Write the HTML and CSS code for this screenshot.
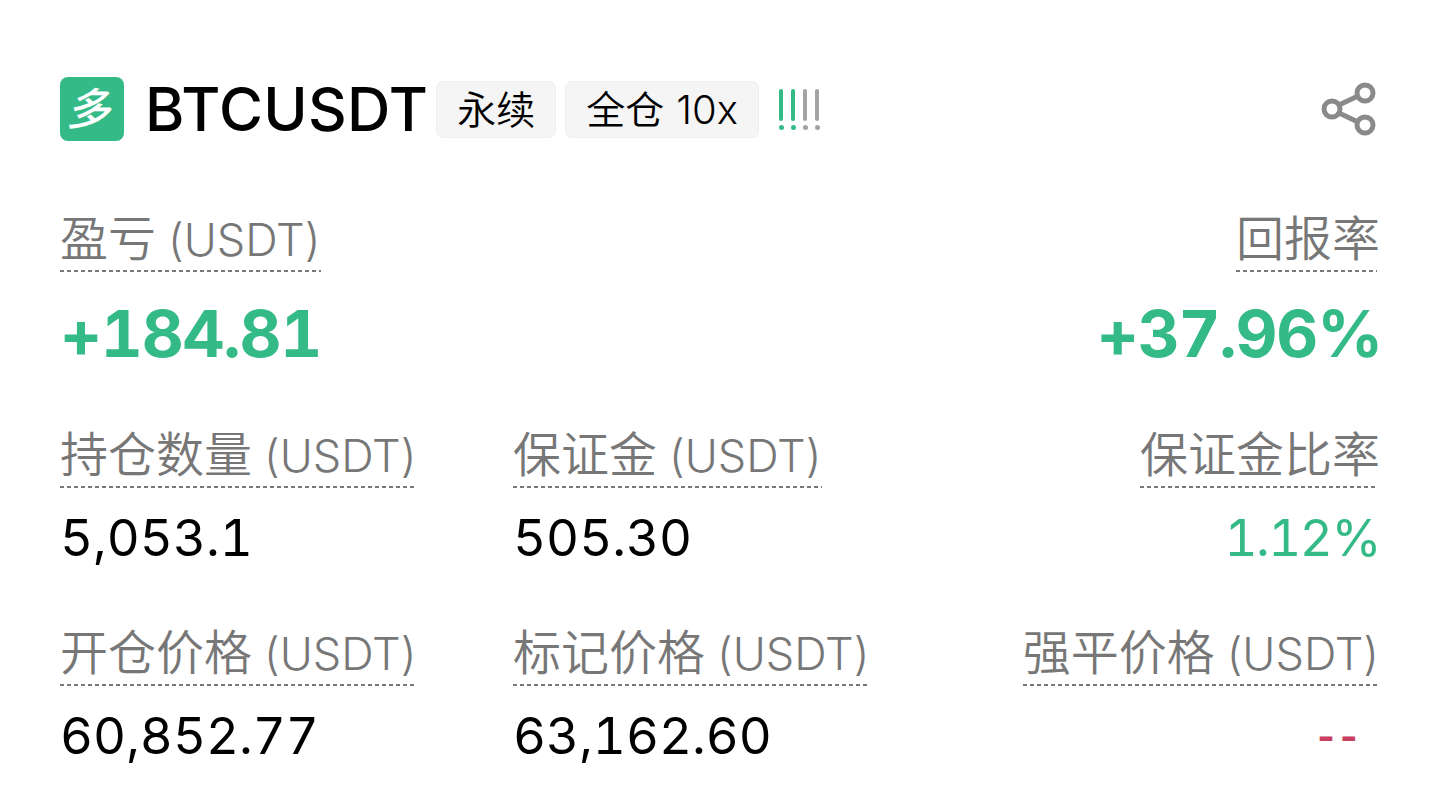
FILE: index.html
```html
<!DOCTYPE html>
<html lang="en">
<head>
    <meta charset="UTF-8">
    <meta name="viewport" content="width=device-width, initial-scale=1.0">
    <title>BTCUSDT</title>
    <link rel="stylesheet" href="styles.css">
</head>
<body>
    <div class="header">
        <div class="side-badge"><span>多</span></div>
        <div class="symbol">BTCUSDT</div>
        <div class="tag">永续</div>
        <div class="tag">全仓 <span class="lev">10x</span></div>
        <div class="risk">
            <span class="mark on"></span>
            <span class="mark on"></span>
            <span class="mark"></span>
            <span class="mark"></span>
        </div>
        <svg class="share" width="56" height="56" viewBox="0 0 56 56" fill="none" stroke="#8a8a8a" stroke-width="5">
            <circle cx="44" cy="12" r="8"/>
            <circle cx="11" cy="28" r="8"/>
            <circle cx="44" cy="44" r="8"/>
            <path d="M18 24L37 15M18 32L37 41"/>
        </svg>
    </div>
    <div class="stats">
        <div class="stat">
            <div class="label">盈亏 <span class="unit">(USDT)</span></div>
            <div class="value big green">+184.81</div>
        </div>
        <div class="stat right col3">
            <div class="label short">回报率</div>
            <div class="value big green">+37.96%</div>
        </div>
        <div class="stat row2">
            <div class="label">持仓数量 <span class="unit">(USDT)</span></div>
            <div class="value">5,053.1</div>
        </div>
        <div class="stat row2">
            <div class="label">保证金 <span class="unit">(USDT)</span></div>
            <div class="value">505.30</div>
        </div>
        <div class="stat right row2">
            <div class="label short">保证金比率</div>
            <div class="value rate green">1.12%</div>
        </div>
        <div class="stat row3">
            <div class="label">开仓价格 <span class="unit">(USDT)</span></div>
            <div class="value">60,852.77</div>
        </div>
        <div class="stat row3">
            <div class="label">标记价格 <span class="unit">(USDT)</span></div>
            <div class="value">63,162.60</div>
        </div>
        <div class="stat right row3">
            <div class="label">强平价格 <span class="unit">(USDT)</span></div>
            <div class="value red">--</div>
        </div>
    </div>
</body>
</html>
```

FILE: styles.css
```css
*{
    margin:0;
    padding:0;
    box-sizing: border-box;
}
body{
    height: 100vh;
    padding: 77px 60px 0;
    background-color: #fff;
    color: #000;
    font-family: Inter, "Noto Sans CJK SC", sans-serif;
    overflow: hidden;
}
.header{
    height: 64px;
    display: flex;
    align-items: center;
}
.side-badge{
    width: 64px;
    height: 64px;
    margin-right: 21px;
    border-radius: 8px;
    background-color: #34ba87;
    color: #fff;
    font-size: 44px;
    font-weight: 500;
    line-height: 64px;
    text-align: center;
}
.side-badge span{
    display: inline-block;
    transform: skewX(-14deg);
}
.symbol{
    margin-right: -1px;
    font-size: 60px;
    font-weight: 500;
    line-height: 64px;
    letter-spacing: 0.3px;
}
.tag{
    height: 57px;
    margin-left: 9px;
    padding: 0 20px;
    border: 1px solid #eeeeee;
    border-radius: 7px;
    background-color: #f5f5f5;
    font-size: 39px;
    font-weight: 350;
    line-height: 56px;
    word-spacing: 1px;
}
.lev{
    font-size: 40px;
}
.risk{
    display: flex;
    gap: 7px;
    margin-left: 20px;
}
.mark{
    display: flex;
    flex-direction: column;
    align-items: center;
    gap: 4px;
    width: 5px;
}
.mark::before{
    content: "";
    width: 4px;
    height: 32px;
    border-radius: 2px;
    background-color: #a3a3a3;
}
.mark::after{
    content: "";
    width: 5px;
    height: 5px;
    border-radius: 50%;
    background-color: #a3a3a3;
}
.mark.on::before, .mark.on::after{
    background-color: #34ba87;
}
.share{
    margin-left: auto;
    margin-right: 3px;
}
.stats{
    display: grid;
    grid-template-columns: 453px 1fr 1fr;
    margin-top: 71px;
}
.stat{
    display: flex;
    flex-direction: column;
    align-items: flex-start;
}
.stat.right{
    align-items: flex-end;
    justify-self: end;
}
.col3{
    grid-column: 3;
}
.row2{
    margin-top: 56px;
}
.row3{
    margin-top: 58px;
}
.label{
    height: 60px;
    padding-right: 1px;
    color: #777;
    font-size: 48px;
    font-weight: 350;
    line-height: 54px;
    white-space: nowrap;
    word-spacing: -1.5px;
    background: repeating-linear-gradient(to right, #777 0 4px, transparent 4px 7px) left bottom / 100% 2px no-repeat;
}
.unit{
    font-size: 45px;
}
.label.short{
    padding-right: 0;
    background-size: calc(100% - 3px) 2px;
}
.value{
    font-size: 51px;
    font-variant-numeric: tabular-nums;
    line-height: 60px;
    margin-top: 20px;
    white-space: nowrap;
}
.value.big{
    margin-top: 24px;
    font-size: 65px;
    font-weight: 700;
    line-height: 76px;
    letter-spacing: -1.2px;
}
.stat.right .value.big{
    margin-right: -2px;
}
.value.rate{
    letter-spacing: -1.5px;
}
.green{
    color: #34ba87;
}
.red{
    margin-top: 20px;
    padding-right: 21px;
    color: #c8405f;
    font-size: 38px;
    font-weight: 700;
    letter-spacing: -2px;
}
```
